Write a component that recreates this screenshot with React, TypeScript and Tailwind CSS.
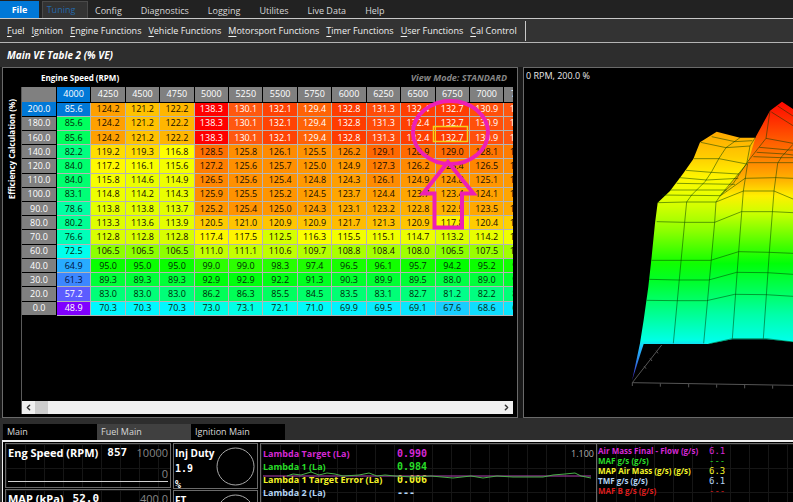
import { useState } from 'react';
import { ChevronLeft, ChevronRight } from 'lucide-react';

const MENUS = ['Config', 'Diagnostics', 'Logging', 'Utilites', 'Live Data', 'Help'];

const TOOLBAR = [
  'Fuel',
  'Ignition',
  'Engine Functions',
  'Vehicle Functions',
  'Motorsport Functions',
  'Timer Functions',
  'User Functions',
  'Cal Control',
];

const RPM = [4000, 4250, 4500, 4750, 5000, 5250, 5500, 5750, 6000, 6250, 6500, 6750, 7000, 7250];

const VE_ROWS: { load: number; cells: number[] }[] = [
  { load: 200, cells: [85.6, 124.2, 121.2, 122.2, 138.3, 130.1, 132.1, 129.4, 132.8, 131.3, 132.4, 132.7, 130.9, 130.2] },
  { load: 180, cells: [85.6, 124.2, 121.2, 122.2, 138.3, 130.1, 132.1, 129.4, 132.8, 131.3, 132.4, 132.7, 130.9, 130.2] },
  { load: 160, cells: [85.6, 124.2, 121.2, 122.2, 138.3, 130.1, 132.1, 129.4, 132.8, 131.3, 132.4, 132.7, 130.9, 130.2] },
  { load: 140, cells: [82.2, 119.2, 119.3, 116.8, 128.5, 125.8, 126.1, 125.5, 126.2, 129.1, 128.9, 129.0, 128.1, 127.4] },
  { load: 120, cells: [84.0, 117.2, 116.1, 115.6, 127.2, 125.6, 125.7, 125.0, 124.9, 127.3, 126.2, 126.4, 126.5, 126.0] },
  { load: 110, cells: [84.0, 115.8, 114.6, 114.9, 126.5, 125.6, 125.4, 124.8, 124.3, 126.1, 124.9, 124.8, 125.1, 124.8] },
  { load: 100, cells: [83.1, 114.8, 114.2, 114.3, 125.9, 125.5, 125.2, 124.5, 123.7, 124.4, 123.7, 123.4, 124.1, 123.8] },
  { load: 90, cells: [78.6, 113.8, 113.8, 113.7, 125.2, 125.4, 125.0, 124.3, 123.1, 123.2, 122.8, 122.5, 123.5, 123.2] },
  { load: 80, cells: [80.2, 113.3, 113.6, 113.9, 120.5, 121.0, 120.9, 120.9, 121.7, 121.3, 120.9, 117.8, 120.4, 120.1] },
  { load: 70, cells: [76.6, 112.8, 112.8, 112.8, 117.4, 117.5, 112.5, 116.3, 115.5, 115.1, 114.7, 113.2, 114.2, 115.0] },
  { load: 60, cells: [72.5, 106.5, 106.5, 106.5, 111.0, 111.1, 110.6, 109.7, 108.8, 108.4, 108.0, 106.5, 107.5, 108.2] },
  { load: 40, cells: [64.9, 95.0, 95.0, 95.0, 99.0, 99.0, 98.3, 97.4, 96.5, 96.1, 95.7, 94.2, 95.2, 96.0] },
  { load: 30, cells: [61.3, 89.3, 89.3, 89.3, 92.9, 92.9, 92.2, 91.3, 90.3, 89.9, 89.5, 88.0, 89.0, 90.0] },
  { load: 20, cells: [57.2, 83.0, 83.0, 83.0, 86.2, 86.3, 85.5, 84.5, 83.5, 83.1, 82.7, 81.2, 82.2, 83.0] },
  { load: 0, cells: [48.9, 70.3, 70.3, 70.3, 73.0, 73.1, 72.1, 71.0, 69.9, 69.5, 69.1, 67.6, 68.6, 69.2] },
];

// value, r, g, b
const HEAT: number[][] = [
  [48.9, 128, 0, 255],
  [57.2, 92, 92, 255],
  [61.3, 60, 135, 255],
  [64.9, 40, 172, 255],
  [67.6, 24, 205, 255],
  [70.3, 0, 248, 255],
  [72.5, 0, 255, 238],
  [76.6, 0, 255, 184],
  [83, 0, 255, 120],
  [89.3, 0, 255, 56],
  [94, 0, 255, 0],
  [99, 44, 255, 0],
  [106.5, 140, 255, 0],
  [111, 196, 255, 0],
  [114, 230, 255, 0],
  [116.8, 255, 255, 0],
  [121, 255, 196, 0],
  [124.2, 255, 160, 0],
  [126, 255, 140, 0],
  [129, 255, 105, 0],
  [130.1, 255, 88, 16],
  [132.8, 255, 60, 0],
  [138.3, 255, 0, 0],
];

function heatColor(v: number) {
  let i = 1;
  while (i < HEAT.length - 1 && HEAT[i][0] < v) i++;
  const a = HEAT[i - 1];
  const b = HEAT[i];
  const t = Math.min(1, Math.max(0, (v - a[0]) / (b[0] - a[0])));
  const mix = [1, 2, 3].map((k) => Math.round(a[k] + (b[k] - a[k]) * t));
  return `rgb(${mix.join(',')})`;
}

function textTone(v: number) {
  if (v > 129.2 || v < 58) return 'text-white';
  if (v < 67) return 'text-[#001040]';
  if (v < 106) return 'text-[#002808]';
  return 'text-[#140c00]';
}

function MenuBar() {
  return (
    <nav className="flex h-[19px] shrink-0 items-stretch border-b border-[#c8c8c8] bg-[#222222] text-[9px] text-[#d8d8d8]">
      <button className="mt-px w-[39px] bg-[#0078d7] font-bold text-white">File</button>
      <button className="ml-[3px] mt-px w-[46px] border-x border-t border-[#4a4a4a] bg-[#333333] pr-2 text-[#2468a8]">
        Tuning
      </button>
      <div className="ml-[7px] flex gap-[19px]">
        {MENUS.map((m) => (
          <button key={m} className="pt-[3px]">{m}</button>
        ))}
      </div>
    </nav>
  );
}

function Toolbar() {
  return (
    <div className="flex h-[24px] shrink-0 items-center border-b border-[#b4b4b4] bg-[#333333] pl-[7px] text-[9px] text-[#f0f0f0]">
      <div className="flex h-5 items-center gap-[7px] border-r border-[#c8c8c8] pr-2">
        {TOOLBAR.map((t) => (
          <button key={t} className="whitespace-nowrap">
            <span className="underline underline-offset-2">{t[0]}</span>
            {t.slice(1)}
          </button>
        ))}
      </div>
    </div>
  );
}

function VeTable() {
  const [selected, setSelected] = useState('200-4000');

  return (
    <table className="h-[229px] w-[517px] table-fixed border-collapse text-center text-[9px] leading-[12px]">
      <thead>
        <tr className="h-[15px] bg-[#808080] text-white">
          <th className="border-r border-black p-0" />
          {RPM.map((r) => (
            <th
              key={r}
              className={`border-r border-b border-black p-0 font-medium ${selected.endsWith(`-${r}`) ? 'bg-[#0078d7]' : ''}`}
            >
              {r}
            </th>
          ))}
        </tr>
      </thead>
      <tbody>
        {VE_ROWS.map((row) => (
          <tr key={row.load}>
            <th
              className={`border-r border-b border-black p-0 font-medium text-white ${selected.startsWith(`${row.load}-`) ? 'bg-[#0078d7]' : 'bg-[#808080]'}`}
            >
              {row.load.toFixed(1)}
            </th>
            {row.cells.map((v, i) => {
              const id = `${row.load}-${RPM[i]}`;
              const active = id === selected;
              return (
                <td
                  key={id}
                  onClick={() => setSelected(id)}
                  className={`border p-0 ${active ? 'border-dashed border-black text-white' : `border-[#b4b4b4] ${textTone(v)}`}`}
                  style={{ backgroundColor: active ? '#0078d7' : heatColor(v) }}
                >
                  {v.toFixed(1)}
                </td>
              );
            })}
          </tr>
        ))}
      </tbody>
    </table>
  );
}

function Annotation() {
  return (
    <svg
      className="pointer-events-none absolute left-[385px] top-[8px]"
      width="86"
      height="140"
      viewBox="407 95 86 140"
      fill="none"
    >
      <rect x="433.5" y="126.5" width="34" height="15" stroke="#f2d21c" strokeWidth="1.5" />
      <path d="M435.5 127v14" stroke="#f2d21c" />
      <ellipse cx="450.5" cy="132.5" rx="37.5" ry="31.5" stroke="#ee1fb4" strokeWidth="4" />
      <path d="M448 162L473.5 193.5H462V227.5H434.5V193.5H423Z" stroke="#ee1fb4" strokeWidth="4" />
    </svg>
  );
}

function TablePanel() {
  return (
    <section className="flex w-[516px] shrink-0 flex-col border border-[#6a6a6a] bg-black">
      <div className="flex h-[19px] shrink-0 items-center justify-between pl-[38px] pr-[10px]">
        <h2 className="text-[8px] font-bold text-white">Engine Speed (RPM)</h2>
        <span className="text-[9px] font-bold italic text-[#868686]">View Mode: STANDARD</span>
      </div>
      <div className="flex min-h-0 flex-1 pb-[3px] pr-[4px]">
        <div className="flex w-[18px] shrink-0 justify-center pt-[12px]">
          <span className="rotate-180 self-start whitespace-nowrap text-[8px] font-bold text-white [writing-mode:vertical-rl]">
            Efficiency Calculation (%)
          </span>
        </div>
        <div className="relative flex min-w-0 flex-1 flex-col border-l border-[#5a5a5a]">
          <div className="flex-1 overflow-hidden">
            <VeTable />
          </div>
          <div className="flex h-[13px] shrink-0 items-center bg-[#f0f0f0] text-[#333333]">
            <button aria-label="Scroll left" className="flex w-[13px] justify-center">
              <ChevronLeft size={9} strokeWidth={4} />
            </button>
            <div className="h-full w-[13px] bg-[#cdcdcd]" />
            <button aria-label="Scroll right" className="ml-auto flex w-[13px] justify-center">
              <ChevronRight size={9} strokeWidth={4} />
            </button>
          </div>
          <Annotation />
        </div>
      </div>
    </section>
  );
}

function SurfacePlot() {
  return (
    <svg className="absolute inset-0 h-full w-full" viewBox="12 24 807 1050" preserveAspectRatio="xMinYMin slice">
      <defs>
        <linearGradient id="front" gradientUnits="userSpaceOnUse" x1="0" y1="215" x2="0" y2="960">
          <stop offset="0" stopColor="#ffa800" />
          <stop offset="0.1" stopColor="#ffcc00" />
          <stop offset="0.18" stopColor="#fff400" />
          <stop offset="0.24" stopColor="#eeff00" />
          <stop offset="0.3" stopColor="#d2ff00" />
          <stop offset="0.4" stopColor="#8cff00" />
          <stop offset="0.53" stopColor="#10ff00" />
          <stop offset="0.6" stopColor="#00ff28" />
          <stop offset="0.7" stopColor="#00ff78" />
          <stop offset="0.84" stopColor="#00ffe6" />
          <stop offset="0.87" stopColor="#20c0ff" />
          <stop offset="1" stopColor="#4020c0" />
        </linearGradient>
        <linearGradient id="hill" gradientUnits="userSpaceOnUse" x1="0" y1="125" x2="0" y2="850">
          <stop offset="0" stopColor="#ff0800" />
          <stop offset="0.08" stopColor="#ff3000" />
          <stop offset="0.17" stopColor="#ff6000" />
          <stop offset="0.26" stopColor="#ff8c00" />
          <stop offset="0.33" stopColor="#ffb800" />
          <stop offset="0.39" stopColor="#fff000" />
          <stop offset="0.46" stopColor="#ccff00" />
          <stop offset="0.6" stopColor="#40ff00" />
          <stop offset="0.67" stopColor="#00ff08" />
          <stop offset="0.78" stopColor="#00ff58" />
          <stop offset="0.88" stopColor="#00ffa8" />
          <stop offset="1" stopColor="#00fff0" />
        </linearGradient>
      </defs>
      <path
        fill="url(#front)"
        d="M336 962L360 850L371 780L385 680L395 590L405 490L413 428L450 393L490 340L520 297L540 247L590 215L660 233H707L740 300L637 836L565 852H371L362 880Z"
      />
      <path
        fill="url(#hill)"
        d="M707 231L750 152L786 125L819 147V846L740 838H637L565 852L551 850L588 426L602 405L683 310Z"
      />
      <g fill="none" stroke="#003c00" strokeOpacity="0.5" strokeWidth="3">
        <path d="M413 428L498 426H588L670 393H762L819 417" />
        <path d="M410 485L494 487H584L664 455H758L819 458" />
        <path d="M395 601H572L656 575L748 577L819 580" />
        <path d="M388 658L476 660H566L650 637L742 638L819 643" />
        <path d="M380 721L470 722H560L644 703L738 704L819 709" />
        <path d="M565 852L637 836H740L819 846" />
        <path d="M660 233L618 263L597 295L575 335L555 365L515 405L500 426L494 487L460 850" />
        <path d="M750 152L738 235L683 305L640 370L602 405L588 426L584 487L551 850" />
        <path d="M707 231L690 258L680 312L602 405" />
        <path d="M683 310L670 393L656 575L637 836" />
        <path d="M819 253L785 290L773 310L762 393L748 577L730 836" />
        <path d="M426 405L602 407L675 355L768 353L819 355" />
        <path d="M450 390H620M470 370L645 373M480 353L560 360L655 355M498 331L573 337L657 342" />
        <path d="M522 296H597L680 312M542 247L618 263L690 258M575 230L645 245L697 242" />
        <path d="M683 308H819M700 290L785 293H819M710 277L795 282L819 285M718 262L807 270H819" />
        <path d="M738 235L819 250M754 156L819 197M773 138L819 168" />
      </g>
      <g fill="none" stroke="#555555" strokeWidth="3">
        <path d="M425 855L337 968L819 976" />
        <path d="M372 918L378 926M390 895L396 903M408 872L414 880" />
        <path d="M337 968V978M421 970V980M506 972V982M590 973V983M674 975V985M758 976V986" />
      </g>
    </svg>
  );
}

function PlotPanel() {
  return (
    <section className="relative min-w-0 flex-1 overflow-hidden border-y border-l border-[#6a6a6a] bg-black">
      <SurfacePlot />
      <p className="relative pl-[2px] pt-px text-[9px] leading-[14px] text-[#e8e8e8]">0 RPM, 200.0 %</p>
    </section>
  );
}

interface Channel {
  label: string;
  value: string;
  tone: string;
}

const LAMBDA: Channel[] = [
  { label: 'Lambda Target (La)', value: '0.990', tone: 'text-[#d428d4]' },
  { label: 'Lambda 1 (La)', value: '0.984', tone: 'text-[#28dc28]' },
  { label: 'Lambda 1 Target Error (La)', value: '0.006', tone: 'text-[#f4f428]' },
  { label: 'Lambda 2 (La)', value: '---', tone: 'text-[#b4d4f4]' },
];

const AIRFLOW: Channel[] = [
  { label: 'Air Mass Final - Flow (g/s)', value: '6.1', tone: 'text-[#d428d4]' },
  { label: 'MAF g/s (g/s)', value: '---', tone: 'text-[#28dc28]' },
  { label: 'MAP Air Mass (g/s) (g/s)', value: '6.3', tone: 'text-[#f4f428]' },
  { label: 'TMF g/s (g/s)', value: '6.1', tone: 'text-[#b4d4f4]' },
  { label: 'MAF B g/s (g/s)', value: '---', tone: 'text-[#dc1c1c]' },
];

const GRID_BG =
  'bg-[linear-gradient(to_right,#161616_1px,transparent_1px),linear-gradient(to_bottom,#161616_1px,transparent_1px)] bg-[size:19px_24px]';

function StripGauge({ label, value, max, min }: { label: string; value: string; max: string; min: string }) {
  return (
    <div className={`h-[45px] border border-[#6a6a6a] px-[2px] ${GRID_BG}`}>
      <div className="flex items-center text-[11px] leading-[18px]">
        <span className="font-bold text-white">{label}</span>
        <span className="ml-[9px] font-['DejaVu_Sans_Mono',monospace] font-bold text-white">{value}</span>
        <span className="ml-auto text-[11px] text-[#868686]">{max}</span>
      </div>
      <div className="flex h-[20px] items-end justify-end border-b border-[#d0d0d0] text-[11px] leading-[14px] text-[#868686]">
        {min}
      </div>
    </div>
  );
}

function DialGauge({ label, value, unit }: { label: string; value: string; unit: string }) {
  return (
    <div className="flex h-[46px] justify-between overflow-hidden border border-[#6a6a6a] pl-px pr-[2px]">
      <div className="whitespace-nowrap pt-px text-[10px] font-bold leading-[16px] text-white">
        <p>{label}</p>
        <p className="font-['DejaVu_Sans_Mono',monospace]">{value}</p>
        <p className="font-['DejaVu_Sans_Mono',monospace]">{unit}</p>
      </div>
      <svg className="mt-[3px] shrink-0" width="39" height="39" viewBox="0 0 39 39" fill="none">
        <circle cx="19.5" cy="19.5" r="18.5" stroke="#a8a8a8" />
      </svg>
    </div>
  );
}

function LambdaChart() {
  return (
    <div className={`relative w-[337px] shrink-0 overflow-hidden border border-[#6a6a6a] ${GRID_BG}`}>
      <div className="flex items-start justify-between pl-[2px] pr-[2px] pt-[3px]">
        <dl className="grid grid-cols-[134px_auto] text-[9px] font-bold leading-[13px]">
          {LAMBDA.map((c) => (
            <div key={c.label} className={`contents ${c.tone}`}>
              <dt className="whitespace-nowrap">{c.label}</dt>
              <dd className="font-['DejaVu_Sans_Mono',monospace] text-[10px]">{c.value}</dd>
            </div>
          ))}
        </dl>
        <span className="text-[9px] leading-[13px] text-[#b0b0b0]">1.100</span>
      </div>
      <svg
        className="absolute left-0 top-[26px] h-[10px] w-full"
        viewBox="0 0 335 10"
        preserveAspectRatio="none"
        fill="none"
      >
        <path d="M2 6H330" stroke="#b040b0" />
        <path
          d="M26 6L32 4L40 5L50 2L58 5L66 3L74 4L82 6L98 5L108 3L116 6L124 5L134 6L152 7L170 6L192 8L210 6L222 8L236 6L252 7L266 7L282 7L292 5L304 4L314 3L320 6L330 8"
          stroke="#48b048"
        />
      </svg>
    </div>
  );
}

function AirflowPanel() {
  return (
    <div className={`min-w-0 flex-1 overflow-hidden border-t border-[#6a6a6a] pl-px pt-[2px] ${GRID_BG}`}>
      <dl className="grid grid-cols-[111px_auto] text-[8px] font-bold leading-[10px]">
        {AIRFLOW.map((c) => (
          <div key={c.label} className={`contents ${c.tone}`}>
            <dt className="whitespace-nowrap">{c.label}</dt>
            <dd className="font-['DejaVu_Sans_Mono',monospace] text-[9px] font-normal">{c.value}</dd>
          </div>
        ))}
      </dl>
    </div>
  );
}

function GaugeDock() {
  const [tab, setTab] = useState('Fuel Main');

  return (
    <section className="h-[84px] shrink-0 overflow-hidden bg-[#2d2d2d] pl-[2px] pt-[6px]">
      <div className="flex h-[16px] pl-px text-[9px] text-[#d8d8d8]">
        {['Main', 'Fuel Main', 'Ignition Main'].map((t) => (
          <button
            key={t}
            onClick={() => setTab(t)}
            className={`w-[94px] pl-1 text-left ${t === tab ? 'bg-[#404040]' : 'bg-black'}`}
          >
            {t}
          </button>
        ))}
      </div>
      <div className="flex h-[100px] gap-[2px] border-l border-t-2 border-[#f0f0f0] bg-black pl-[2px] pt-px">
        <div className="flex w-[166px] shrink-0 flex-col gap-px">
          <StripGauge label="Eng Speed (RPM)" value="857" max="10000" min="0" />
          <StripGauge label="MAP (kPa)" value="52.0" max="400.0" min="0.0" />
        </div>
        <div className="flex w-[85px] shrink-0 flex-col gap-px">
          <DialGauge label="Inj Duty" value="1.9" unit="%" />
          <DialGauge label="FT" value="0.0" unit="%" />
        </div>
        <div className="flex min-w-0 flex-1">
          <LambdaChart />
          <AirflowPanel />
        </div>
      </div>
    </section>
  );
}

export default function App() {
  return (
    <div className="flex h-screen flex-col overflow-hidden bg-[#2d2d2d] font-['Open_Sans','Noto_Sans',sans-serif] font-medium">
      <MenuBar />
      <Toolbar />
      <h1 className="flex h-[24px] shrink-0 items-center pl-[7px] text-[10px] font-bold italic text-white">
        Main VE Table 2 (% VE)
      </h1>
      <main className="flex min-h-0 flex-1 gap-[5px] bg-[#181818] pl-[2px]">
        <TablePanel />
        <PlotPanel />
      </main>
      <GaugeDock />
    </div>
  );
}
